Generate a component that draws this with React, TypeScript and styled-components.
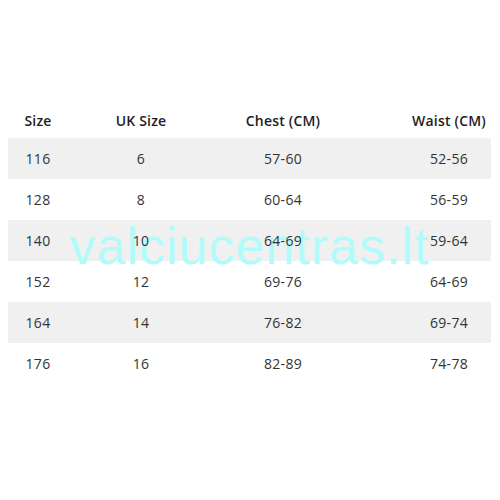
import styled, { createGlobalStyle } from 'styled-components';

const rows = [
  ['116', '6', '57-60', '52-56'],
  ['128', '8', '60-64', '56-59'],
  ['140', '10', '64-69', '59-64'],
  ['152', '12', '69-76', '64-69'],
  ['164', '14', '76-82', '69-74'],
  ['176', '16', '82-89', '74-78'],
];

const headers = ['Size', 'UK Size', 'Chest (CM)', 'Waist (CM)'];

function App() {
  return (
    <>
      <GlobalStyle />
      <Page>
        <Table>
          <HeadRow>
            {headers.map((h, i) => (
              <Cell key={h} $last={i === 3}>{h}</Cell>
            ))}
          </HeadRow>
          {rows.map((r, idx) => (
            <Row key={r[0]} $shaded={idx % 2 === 0}>
              {r.map((v, i) => (
                <Cell key={i} $last={i === 3}>{v}</Cell>
              ))}
            </Row>
          ))}
          <Watermark>valciucentras.lt</Watermark>
        </Table>
      </Page>
    </>
  );
}

export default App;

const GlobalStyle = createGlobalStyle`
  body {
    margin: 0;
    background: #fff;
    font-family: 'Open Sans', 'Liberation Sans', sans-serif;
  }
`;

const Page = styled.div`
  width: 500px;
  height: 500px;
  padding: 103px 9px 0 8px;
  box-sizing: border-box;
`;

const Table = styled.div`
  position: relative;
  width: 483px;
`;

const Row = styled.div<{ $shaded?: boolean }>`
  display: grid;
  grid-template-columns: 60px 146px 138px 1fr;
  align-items: center;
  height: 41px;
  font-size: 14px;
  letter-spacing: 0.3px;
  color: #333;
  background: ${({ $shaded }) => ($shaded ? '#f0f0f0' : '#fff')};
`;

const HeadRow = styled(Row)`
  height: 35px;
  font-size: 14px;
  font-weight: 600;
  letter-spacing: 0.2px;
  color: #1e1e1e;
  background: #fff;
`;

const Cell = styled.div<{ $last?: boolean }>`
  position: relative;
  z-index: 1;
  text-align: center;
  padding-left: ${({ $last }) => ($last ? '55px' : '0')};
  white-space: nowrap;
`;

const Watermark = styled.div`
  position: absolute;
  z-index: 0;
  left: 62px;
  top: 113px;
  font-family: 'Liberation Sans', Arial, sans-serif;
  font-size: 52px;
  letter-spacing: 1px;
  color: #b2fbfb;
  pointer-events: none;
  white-space: nowrap;
`;
